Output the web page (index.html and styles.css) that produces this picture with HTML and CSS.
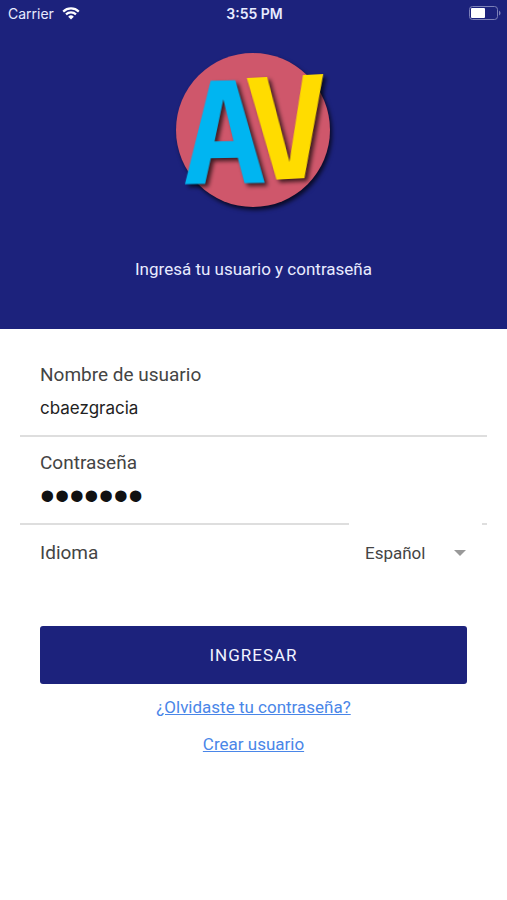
FILE: index.html
```html
<!DOCTYPE html>
<html lang="es">

<head>
  <meta charset="UTF-8">
  <meta name="viewport" content="width=device-width, initial-scale=1.0">
  <title>Ingresar</title>
  <link rel="stylesheet" href="styles.css">
</head>

<body>
  <header class="header">
    <div class="status-bar">
      <span class="carrier">Carrier
        <svg class="wifi" viewBox="0 0 18 13" aria-hidden="true">
          <path d="M1.2 4.6a11.2 11.2 0 0 1 15.6 0" />
          <path d="M4 7.4a7.2 7.2 0 0 1 10 0" />
          <path class="wifi-dot" d="M9 12.6 6.2 9.7a4 4 0 0 1 5.6 0z" />
        </svg>
      </span>
      <span class="time">3:55 PM</span>
      <svg class="battery" viewBox="0 0 32 14" aria-hidden="true">
        <rect class="battery-case" x="0.5" y="0.5" width="28" height="13" rx="3" />
        <rect x="2" y="2" width="14" height="10" rx="1" />
        <path class="battery-tip" d="M30 4.5q1.6 1 1.6 2.5T30 9.5z" />
      </svg>
    </div>
    <svg class="logo" viewBox="0 0 170 170" role="img" aria-label="AV">
      <circle class="logo-disc" cx="84" cy="85" r="77" />
      <text class="logo-a" x="55" y="138" transform="rotate(-1 55 85)">A</text>
      <text class="logo-v" x="119" y="134" transform="rotate(-3 118 85)">V</text>
    </svg>
    <p class="intro">Ingresá tu usuario y contraseña</p>
  </header>

  <main>
    <form class="login">
      <div class="field">
        <label for="user">Nombre de usuario</label>
        <input id="user" type="text" value="cbaezgracia">
      </div>
      <div class="field">
        <label for="password">Contraseña</label>
        <input id="password" class="password" type="password" value="1234567">
      </div>
      <div class="language">
        <label for="language">Idioma</label>
        <select id="language">
          <option>Español</option>
          <option>English</option>
        </select>
        <svg class="arrow" viewBox="0 0 12 6" aria-hidden="true">
          <path d="M0 0h12L6 6z" />
        </svg>
      </div>
      <button class="submit" type="submit">INGRESAR</button>
    </form>
    <nav class="links">
      <a href="#recuperar">¿Olvidaste tu contraseña?</a>
      <a href="#crear">Crear usuario</a>
    </nav>
  </main>
</body>

</html>
```

FILE: styles.css
```css
* {
  box-sizing: border-box;
}

body {
  margin: 0;
  background-color: #fff;
  font-family: Roboto, "Liberation Sans", sans-serif;
  font-size: 17px;
  color: #444;
}

.header {
  display: flex;
  flex-direction: column;
  align-items: center;
  padding-bottom: 48px;
  background-color: #1c227c;
  color: #e8ebff;
}

.status-bar {
  display: grid;
  grid-template-columns: 1fr auto 1fr;
  align-items: center;
  width: 100%;
  height: 26px;
  padding: 0 6px 0 8px;
  font-family: Inter, sans-serif;
  font-size: 14px;
}

.carrier {
  display: flex;
  align-items: center;
  gap: 8px;
}

.wifi {
  width: 18px;
  height: 13px;
  fill: none;
  stroke: #fff;
  stroke-width: 2.2;
}

.wifi .wifi-dot {
  fill: #fff;
  stroke: none;
}

.time {
  font-weight: 600;
}

.battery {
  justify-self: end;
  width: 32px;
  height: 14px;
  fill: #fff;
}

.battery .battery-case {
  fill: none;
  stroke: #7c80b8;
}

.battery .battery-tip {
  fill: #7c80b8;
}

.logo {
  width: 170px;
  height: 170px;
  margin-top: 19px;
  overflow: visible;
  font-family: "DejaVu Sans Mono", monospace;
  font-size: 140px;
  font-weight: bold;
  text-anchor: middle;
}

.logo-disc {
  fill: #cf576b;
  filter: drop-shadow(2px 3px 2px rgba(0, 0, 0, 0.7));
}

.logo-a {
  fill: #00b5f1;
  filter: drop-shadow(3px 3px 2px rgba(0, 0, 0, 0.7));
}

.logo-v {
  fill: #ffdc00;
  filter: drop-shadow(3px 3px 2px rgba(0, 0, 0, 0.7));
}

.intro {
  margin: 42px 0 0;
  line-height: 24px;
}

.login {
  padding: 28px 20px 0;
}

.field {
  display: flex;
  flex-direction: column;
  height: 88px;
  padding: 12px 20px 0;
  border-bottom: 2px solid #dedede;
}

.field:first-child {
  height: 80px;
  padding-top: 4px;
}

.field label,
.language label {
  font-size: 19px;
  line-height: 28px;
}

.field input {
  width: 100%;
  height: 38px;
  padding: 0;
  border: 0;
  outline: 0;
  background: none;
  font-family: Inter, sans-serif;
  font-size: 17px;
  color: #222;
}

.field .password {
  font-family: "Liberation Sans", sans-serif;
  font-size: 42px;
  color: #111;
}

/* the white select box covers part of the line above it */
.language {
  display: grid;
  grid-template-columns: 1fr 133px;
  grid-template-rows: 56px;
  align-items: center;
  padding: 0 5px 0 20px;
}

.language select {
  grid-column: 2;
  grid-row: 1;
  height: 62px;
  padding: 0 16px;
  border: 0;
  background-color: #fff;
  appearance: none;
  font-family: inherit;
  font-size: 17px;
  color: #444;
}

.arrow {
  grid-column: 2;
  grid-row: 1;
  justify-self: end;
  width: 12px;
  height: 6px;
  margin-right: 16px;
  fill: #999;
  pointer-events: none;
}

.submit {
  display: block;
  width: calc(100% - 40px);
  height: 58px;
  margin: 45px auto 0;
  border: 0;
  border-radius: 3px;
  background-color: #1c227c;
  font-family: inherit;
  font-size: 17px;
  letter-spacing: 1px;
  color: #f0f2ff;
}

.links {
  display: flex;
  flex-direction: column;
  align-items: center;
  gap: 13px;
  padding-top: 11px;
}

.links a {
  line-height: 24px;
  color: #4a86e8;
}
```
